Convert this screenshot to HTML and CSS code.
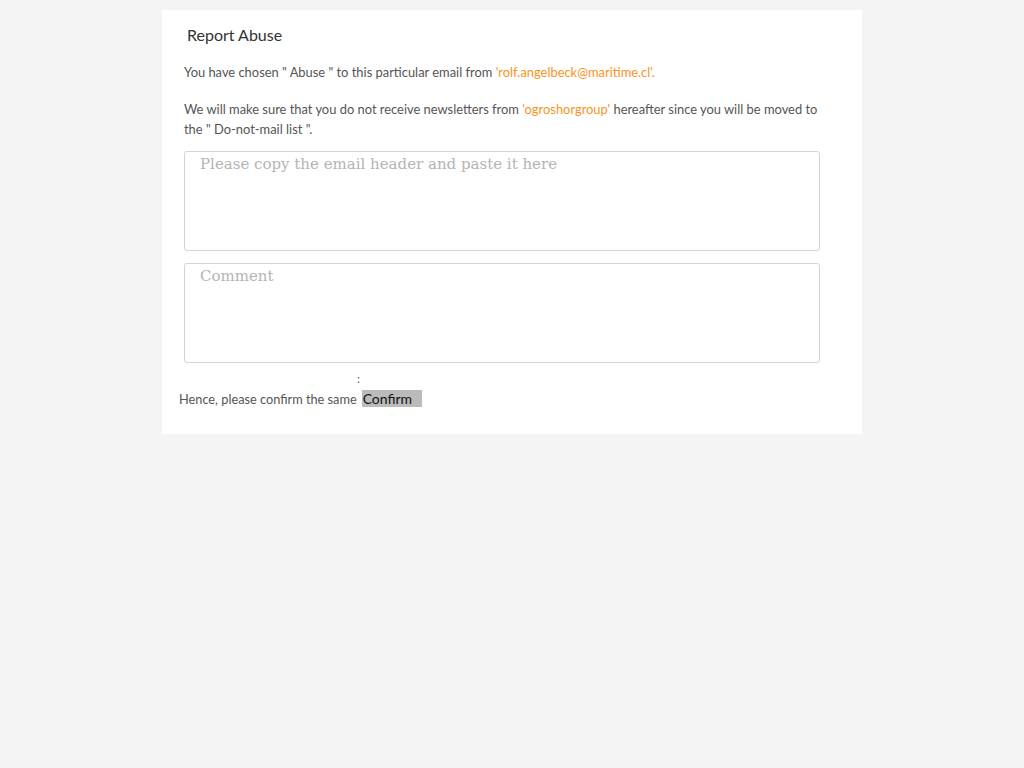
FILE: index.html
```html
<!DOCTYPE html>
<html>
<head>
<meta charset="utf-8">
<link rel="stylesheet" href="styles.css">
</head>
<body>
<div class="panel">
  <h2 class="title">Report Abuse</h2>
  <div class="body">
    <p class="msg">You have chosen " Abuse " to this particular email from <span class="hl">'rolf.angelbeck@maritime.cl'.</span></p>
    <p class="msg">We will make sure that you do not receive newsletters from <span class="hl">'ogroshorgroup'</span> hereafter since you will be moved to the " Do-not-mail list ".</p>
    <textarea class="box" placeholder="Please copy the email header and paste it here"></textarea>
    <textarea class="box" placeholder="Comment"></textarea>
  </div>
  <div class="colon">:</div>
  <div class="confirm-row">
    <span class="label">Hence, please confirm the same</span>
    <button class="btn">Confirm</button>
  </div>
</div>
</body>
</html>
```
FILE: styles.css
```css
html, body {
  margin: 0;
  padding: 0;
  background: #f4f4f4;
}
body {
  font-family: Lato, "Open Sans", sans-serif;
  color: #555;
}
.panel {
  width: 700px;
  margin: 10px auto 0;
  background: #fff;
  padding: 14px 0 27px;
  box-sizing: border-box;
}
.title {
  margin: 0 0 0 25px;
  font-size: 16px;
  font-weight: 400;
  color: #333;
  line-height: 22px;
}
.body {
  padding: 0 36px 0 22px;
}
.msg {
  margin: 16px 0 0;
  font-size: 12.9px;
  line-height: 20px;
}
.msg + .msg { margin-top: 17px; }
.hl { color: #f7941d; }
.box {
  display: block;
  width: 636px;
  height: 100px;
  box-sizing: border-box;
  margin: 12px 0 0;
  border: 1px solid #d4d4d4;
  border-radius: 3px;
  padding: 3px 15px;
  font-family: "DejaVu Serif", serif;
  font-size: 15px;
  resize: none;
  background: #fff;
}
.box::placeholder { color: #b4b4b4; }
.box + .box { margin-top: 12px; }
.colon {
  margin: 9px 0 0 195px;
  font-size: 12px;
  line-height: 14px;
  color: #555;
}
.confirm-row {
  display: flex;
  align-items: center;
  margin: 4px 0 0 17px;
  font-size: 12.75px;
  color: #555;
}
.btn {
  margin-left: 5px;
  border: 0;
  background: #bbb;
  color: #111;
  font-family: Lato, sans-serif;
  font-size: 14px;
  padding: 0 10px 0 1px;
  height: 17px;
  line-height: 17px;
  border-radius: 0;
}
```
